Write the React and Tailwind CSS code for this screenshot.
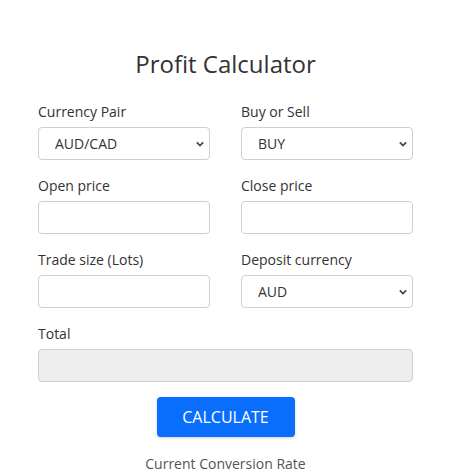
import React from 'react';

const Chevron = () => (
    <svg className="pointer-events-none absolute right-[5px] top-1/2 -translate-y-1/2" width="10" height="10" viewBox="0 0 10 10">
        <path d="M1.8 3.4 L5 6.5 L8.2 3.4" fill="none" stroke="#444" strokeWidth="1.7" />
    </svg>
);

const Field = ({ label, children }) => (
    <div className="flex flex-col">
        <label className="text-[14px] leading-[20px] text-[#333] mb-[5px]">{label}</label>
        {children}
    </div>
);

const Select = ({ value, options }) => (
    <div className="relative">
        <select
            defaultValue={value}
            className="w-full h-[33px] appearance-none rounded-[4px] border border-[#cfcfcf] bg-white pl-[16px] text-[14px] text-[#333] outline-none"
        >
            {options.map((o) => (
                <option key={o}>{o}</option>
            ))}
        </select>
        <Chevron />
    </div>
);

const Input = () => (
    <input className="w-full h-[33px] rounded-[4px] border border-[#cfcfcf] bg-white px-3 text-[14px] outline-none" />
);

export default function App() {
    return (
        <div className="min-h-[476px] bg-white font-['Open_Sans',sans-serif]">
            <div className="ml-[38px] w-[375px] pt-[46px]">
                <h1 className="text-center text-[24px] leading-[36px] text-[#333]">Profit Calculator</h1>

                <div className="mt-[20px] grid grid-cols-2 gap-x-[31px] gap-y-[16px]">
                    <Field label="Currency Pair">
                        <Select value="AUD/CAD" options={['AUD/CAD', 'AUD/USD', 'EUR/USD']} />
                    </Field>
                    <Field label="Buy or Sell">
                        <Select value="BUY" options={['BUY', 'SELL']} />
                    </Field>
                    <Field label="Open price">
                        <Input />
                    </Field>
                    <Field label="Close price">
                        <Input />
                    </Field>
                    <Field label="Trade size (Lots)">
                        <Input />
                    </Field>
                    <Field label="Deposit currency">
                        <Select value="AUD" options={['AUD', 'USD', 'EUR']} />
                    </Field>
                    <div className="col-span-2">
                        <Field label="Total">
                            <div className="h-[33px] rounded-[4px] border border-[#cfcfcf] bg-[#eeeeee]" />
                        </Field>
                    </div>
                </div>

                <div className="mt-[15px] flex justify-center">
                    <button className="h-[40px] w-[138px] rounded-[4px] bg-[#0a6efd] text-[16px] text-white shadow-[0_1px_3px_rgba(0,0,0,0.2)]">
                        CALCULATE
                    </button>
                </div>

                <p className="mt-[17px] text-center text-[14px] leading-[20px] text-[#555]">Current Conversion Rate</p>
            </div>
        </div>
    );
}
